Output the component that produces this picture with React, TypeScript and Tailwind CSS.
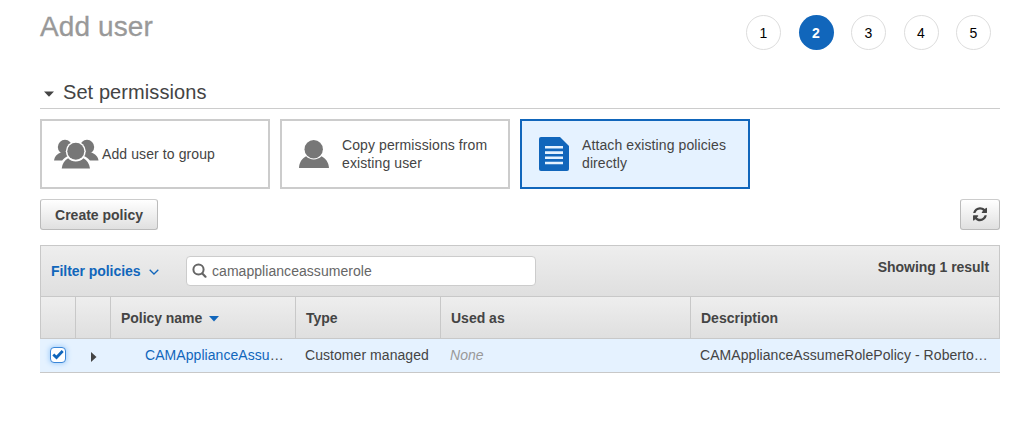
import type { ReactNode } from "react";

function GroupIcon() {
  return (
    <svg width="46" height="32" viewBox="0 0 46 32" fill="#777" className="block">
      <circle cx="12" cy="9" r="7.200" />
      <path d="M1 22.500C1.500 18.500 4 15.600 7.800 14.500h9v8z" />
      <circle cx="34" cy="9" r="7.200" />
      <path d="M45.500 22.500C45 18.500 42 15.600 38.200 14.500h-9v8z" />
      <path d="M8.500 24c1.500-3.200 4-5 6.500-6h16c2.500 1 5 2.800 6.500 6z" fill="#fff" />
      <circle cx="22.800" cy="13.300" r="10" fill="#fff" />
      <path d="M8.700 30.500c.7-5 2.900-8.300 6.400-10.200a10.600 10.600 0 0 0 15.400 0c3.500 1.900 5.800 5.200 6.500 10.200z" />
      <circle cx="22.800" cy="13.300" r="8.500" />
    </svg>
  );
}

function UserIcon() {
  return (
    <svg width="30" height="28" viewBox="0 0 30 28" fill="#777" className="block">
      <circle cx="14.700" cy="9.200" r="9.200" />
      <path d="M0 28c.3-5.500 2.900-9.600 7.100-11.700a11 11 0 0 0 15.400 0c4.300 2.100 7.200 6.200 7.500 11.700z" />
    </svg>
  );
}

function DocumentIcon() {
  return (
    <svg width="30" height="34" viewBox="0 0 30 34" className="block">
      <path d="M2 0h19l9 9v23a2 2 0 0 1-2 2H2a2 2 0 0 1-2-2V2a2 2 0 0 1 2-2z" fill="#1166bb" />
      <path d="M6 10.300h18M6 15.600h18M6 20.800h18M6 26h18" stroke="#e5f2ff" strokeWidth="2.600" />
    </svg>
  );
}

function RefreshIcon() {
  return (
    <svg width="14" height="16.300" viewBox="0 0 1536 1792" fill="#444" className="block">
      <path d="M1511 1056q0 5-1 7-64 268-268 434.500t-478 166.500q-146 0-282.500-55t-243.500-157l-129 129q-19 19-45 19t-45-19-19-45v-448q0-26 19-45t45-19h448q26 0 45 19t19 45-19 45l-137 137q71 66 161 102t187 36q134 0 250-65t186-179q11-17 53-117 8-23 30-23h192q13 0 22.500 9.500t9.500 22.500zm25-800v448q0 26-19 45t-45 19h-448q-26 0-45-19t-19-45 19-45l138-138q-148-137-349-137-134 0-250 65t-186 179q-11 17-53 117-8 23-30 23h-199q-13 0-22.500-9.500t-9.500-22.500v-7q65-268 270-434.500t480-166.500q146 0 284 55.500t245 156.500l130-129q19-19 45-19t45 19 19 45z" />
    </svg>
  );
}

function Step({ n, active = false }: { n: number; active?: boolean }) {
  return (
    <li
      className={
        active
          ? "flex size-[35px] items-center justify-center rounded-full bg-[#1166bb] font-bold text-white"
          : "flex size-[35px] items-center justify-center rounded-full border border-[#ddd] text-black"
      }
    >
      {n}
    </li>
  );
}

function Option({ icon, selected = false, children }: { icon: ReactNode; selected?: boolean; children: ReactNode }) {
  return (
    <button
      className={
        selected
          ? "flex h-[70px] w-[230px] items-center border-2 border-[#1166bb] bg-[#e5f2ff] text-left leading-[18px] tracking-[0.1px]"
          : "flex h-[70px] w-[230px] items-center border-2 border-[#ccc] bg-white text-left leading-[18px] tracking-[0.1px]"
      }
    >
      <span className="flex w-[60px] shrink-0 justify-center pl-1">{icon}</span>
      <span className="w-[155px]">{children}</span>
    </button>
  );
}

const COLS = "grid grid-cols-[35px_35px_185px_145px_250px_1fr]";
const HEAD = "flex items-center border-l border-[#c8c8c8] pl-[10px]";

export default function App() {
  return (
    <main className="h-[446px] w-[1035px] overflow-hidden bg-white pr-[35px] pl-10 font-['Liberation_Sans',Arial,sans-serif] text-sm text-[#444]">
      <header className="flex h-[79px] justify-between pr-[9px]">
        <h1 className="pt-[11px] text-[28px] leading-8 tracking-[0.1px] text-[#999] [-webkit-text-stroke:0.3px_#999]">Add user</h1>
        <ol className="flex gap-[17.500px] pt-[15px]">
          <Step n={1} />
          <Step n={2} active />
          <Step n={3} />
          <Step n={4} />
          <Step n={5} />
        </ol>
      </header>

      <h2 className="flex h-[30px] items-center border-b border-[#ccc] pb-[3px] pl-1 text-xl leading-6 tracking-[0.080px]">
        <svg width="10" height="6" viewBox="0 0 10 6" className="mt-1 mr-[9px]">
          <path d="M0 0.500h10L5 5.800z" fill="#444" />
        </svg>
        Set permissions
      </h2>

      <div className="mt-[10px] flex gap-[10px]">
        <Option
          icon={
            <span className="-mr-1 block">
              <GroupIcon />
            </span>
          }
        >
          Add user to group
        </Option>
        <Option icon={<UserIcon />}>Copy permissions from existing user</Option>
        <Option icon={<DocumentIcon />} selected>
          Attach existing policies directly
        </Option>
      </div>

      <div className="mt-[10px] flex justify-between">
        <button className="h-[31px] w-[118px] rounded-[3px] border border-[#bbb] border-t-[#ccc] bg-linear-to-b from-white to-[#e0e0e0] font-bold">
          Create policy
        </button>
        <button
          aria-label="Refresh"
          className="flex h-[31px] w-10 items-center justify-center rounded-[3px] border border-[#bbb] border-t-[#ccc] bg-linear-to-b from-white to-[#e0e0e0]"
        >
          <RefreshIcon />
        </button>
      </div>

      <section className="mt-[15px]">
        <div className="flex h-[51px] border border-b-0 border-[#c8c8c8] bg-linear-to-b from-[#eee] to-[#dfdfdf] px-[10px]">
          <button className="flex w-[135px] items-center font-bold tracking-[-0.050px] text-[#1166bb]">
            Filter policies
            <svg width="10" height="6" viewBox="0 0 10 6" fill="none" stroke="#1166bb" strokeWidth="1.300" className="mt-[2px] ml-2">
              <path d="M0.700 0.700L5 5l4.300-4.300" />
            </svg>
          </button>
          <div className="mt-[10px] flex h-[30px] w-[350px] items-center rounded-[4px] border border-[#ccc] bg-white pl-[5px] tracking-[0.050px] text-[#666]">
            <svg width="15" height="15" viewBox="0 0 15 15" fill="none" stroke="#666" className="mr-[5px] mb-px">
              <circle cx="6.500" cy="6.500" r="5.100" strokeWidth="2" />
              <path d="M10.300 10.500l3.200 3.200" strokeWidth="2.200" strokeLinecap="round" />
            </svg>
            camapplianceassumerole
          </div>
          <div className="ml-auto pt-[11px] font-bold tracking-[-0.050px]">Showing 1 result</div>
        </div>

        <div className={`${COLS} h-[43px] border-y border-r border-[#c8c8c8] bg-linear-to-b from-[#eee] to-[#dfdfdf] font-bold`}>
          <div className={HEAD} />
          <div className={HEAD} />
          <div className={`${HEAD} tracking-[-0.050px]`}>
            Policy name
            <svg width="10" height="6" viewBox="0 0 10 6" className="mt-[3px] ml-[7px]">
              <path d="M0 0h10L5 5.500z" fill="#1166bb" />
            </svg>
          </div>
          <div className={HEAD}>Type</div>
          <div className={HEAD}>Used as</div>
          <div className={HEAD}>Description</div>
        </div>

        <div className={`${COLS} h-[34px] items-center border-b border-[#c8c8c8] bg-[#e5f2ff] pb-[2px] tracking-[0.060px]`}>
          <div className="flex pl-[10px]">
            <span className="flex size-4 items-center justify-center rounded-[4px] border border-[#3a86d8] bg-white shadow-[0_0_5px_1px_#a5d0fa]">
              <svg width="12" height="11" viewBox="0 0 12 11" fill="none" stroke="#1166bb" strokeWidth="2.800">
                <path d="M1.300 5.500l3.200 3L10.700 2" />
              </svg>
            </span>
          </div>
          <div className="pl-4">
            <svg width="6" height="10" viewBox="0 0 6 10" className="mt-[5px]">
              <path d="M0 0l5.500 5L0 10z" fill="#444" />
            </svg>
          </div>
          <div className="pl-[35px]">
            <span className="text-[#1166bb]">CAMApplianceAssu</span>…
          </div>
          <div className="pl-[10px]">Customer managed</div>
          <div className="pl-[10px] text-[#999] italic">None</div>
          <div className="pl-[10px] whitespace-nowrap">CAMApplianceAssumeRolePolicy - Roberto…</div>
        </div>
      </section>
    </main>
  );
}
